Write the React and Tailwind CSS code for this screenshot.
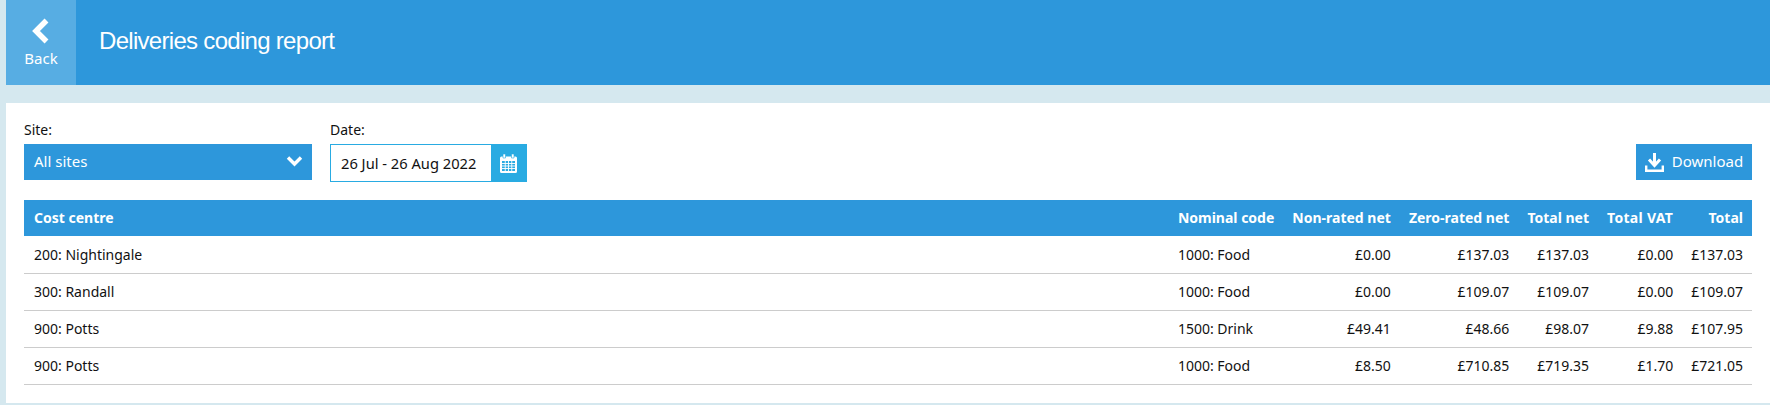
const rows = [
  ["200: Nightingale", "1000: Food", "£0.00", "£137.03", "£137.03", "£0.00", "£137.03"],
  ["300: Randall", "1000: Food", "£0.00", "£109.07", "£109.07", "£0.00", "£109.07"],
  ["900: Potts", "1500: Drink", "£49.41", "£48.66", "£98.07", "£9.88", "£107.95"],
  ["900: Potts", "1000: Food", "£8.50", "£710.85", "£719.35", "£1.70", "£721.05"],
]

function ChevronLeft() {
  return (
    <svg width="18" height="26" viewBox="0 0 18 26" fill="none">
      <path d="M14.5 2.5L4 13l10.500 10.500" stroke="white" strokeWidth="5.500" />
    </svg>
  )
}

function ChevronDown() {
  return (
    <svg width="17" height="12" viewBox="0 0 17 12" fill="none">
      <path d="M2 2.500l6.500 6.500L15 2.500" stroke="white" strokeWidth="3.400" />
    </svg>
  )
}

function CalendarIcon() {
  return (
    <svg width="17" height="20" viewBox="0 0 17 20" fill="none">
      <path d="M0 5a1.500 1.500 0 0 1 1.500-1.500h14A1.500 1.500 0 0 1 17 5v13.500a1.500 1.500 0 0 1-1.500 1.500h-14A1.500 1.500 0 0 1 0 18.500z" fill="white" />
      <path d="M3 1h2.500v4H3zM11.500 1H14v4h-2.500z" fill="white" stroke="#29abe2" strokeWidth="0.600" />
      <path d="M2 8h13v10H2z" fill="#29abe2" />
      <path d="M2 10.500h13M2 13h13M2 15.500h13M5.250 8v10M8.500 8v10M11.750 8v10" stroke="white" strokeWidth="0.900" />
    </svg>
  )
}

function DownloadIcon() {
  return (
    <svg width="19" height="19" viewBox="0 0 19 19" fill="none">
      <path d="M9.500 0v11" stroke="white" strokeWidth="3" />
      <path d="M4 6.500l5.500 6 5.500-6" stroke="white" strokeWidth="3" />
      <path d="M1.200 12.500v5.300h16.600v-5.300" stroke="white" strokeWidth="2.400" />
    </svg>
  )
}

export default function App() {
  return (
    <div className="min-h-[405px] bg-[#d5e8ef] pl-[6px] pb-[2px] font-['Noto_Sans',sans-serif] text-[14px] text-[#111111]">
      <header className="h-[85px] bg-[#2d97db] flex items-stretch">
        <button className="w-[70px] bg-[#57ade3] text-white flex flex-col items-center pt-[18px]">
          <ChevronLeft />
          <span className="text-[15px] leading-[18px] mt-[5px]">Back</span>
        </button>
        <h1 className="ml-[23px] mt-[25px] font-['Liberation_Sans',sans-serif] text-[24px] tracking-[-0.7px] leading-[32px] text-white">
          Deliveries coding report
        </h1>
      </header>

      <main className="mt-[18px] h-[300px] bg-white pt-[15px] pl-[18px] pr-[18px]">
        <div className="flex items-start">
          <div className="w-[288px]">
            <div className="h-[26px] leading-[24px]">Site:</div>
            <button className="w-full h-[36px] bg-[#2d97db] text-[15px] text-white flex items-center justify-between pl-[10px] pr-[9px] pb-[2px]">
              <span>All sites</span>
              <ChevronDown />
            </button>
          </div>
          <div className="ml-[18px]">
            <div className="h-[26px] leading-[24px]">Date:</div>
            <div className="flex h-[38px]">
              <div className="w-[162px] border border-[#29abe2] text-[14.7px] flex items-center pl-[10px] whitespace-nowrap">26 Jul - 26 Aug 2022</div>
              <div className="w-[35px] bg-[#29abe2] flex items-center justify-center pr-[2px]"><CalendarIcon /></div>
            </div>
          </div>
          <button className="ml-auto mt-[26px] h-[36px] w-[116px] bg-[#2d97db] text-[15px] text-white flex items-center justify-center gap-[8px]">
            <DownloadIcon />
            <span className="-mt-[2px]">Download</span>
          </button>
        </div>

        <table className="mt-[18px] w-full border-collapse">
          <thead>
            <tr className="h-[36px] bg-[#2d97db] text-white font-bold">
              <th className="w-full text-left px-[10px] pb-[2px]">Cost centre</th>
              <th className="text-left px-[9px] pb-[2px] whitespace-nowrap">Nominal code</th>
              <th className="text-right px-[9px] pb-[2px] whitespace-nowrap">Non-rated net</th>
              <th className="text-right px-[9px] pb-[2px] whitespace-nowrap">Zero-rated net</th>
              <th className="text-right px-[9px] pb-[2px] whitespace-nowrap">Total net</th>
              <th className="text-right px-[9px] pb-[2px] whitespace-nowrap tracking-[0.3px]">Total VAT</th>
              <th className="text-right px-[9px] pb-[2px] whitespace-nowrap">Total</th>
            </tr>
          </thead>
          <tbody>
            {rows.map((row, i) => (
              <tr key={i} className="h-[37px] border-b border-[#cccccc]">
                <td className="px-[10px]">{row[0]}</td>
                <td className="px-[9px] whitespace-nowrap">{row[1]}</td>
                {row.slice(2).map((val, j) => (
                  <td key={j} className="px-[9px] text-right">{val}</td>
                ))}
              </tr>
            ))}
          </tbody>
        </table>
      </main>
    </div>
  )
}
